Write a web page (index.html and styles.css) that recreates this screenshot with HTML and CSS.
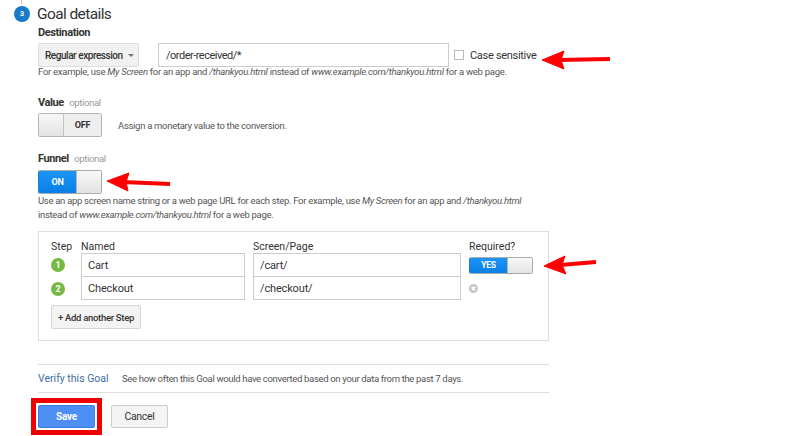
FILE: index.html
```html
<!DOCTYPE html>
<html>
<head>
<meta charset="utf-8">
<link rel="stylesheet" href="styles.css">
</head>
<body>
<div class="page">
  <div class="header">
    <span class="stepnum">3</span>
    <span class="title">Goal details</span>
  </div>
  <div class="content">
    <div class="label">Destination</div>
    <div class="dest-row">
      <div class="dropdown">Regular expression <span class="caret"></span></div>
      <div class="input dest-input">/order-received/*</div>
      <span class="checkbox"></span>
      <span class="cb-label">Case sensitive</span>
    </div>
    <div class="help">For example, use <i>My Screen</i> for an app and <i>/thankyou.html</i> instead of <i>www.example.com/thankyou.html</i> for a web page.</div>

    <div class="label value-label">Value <span class="optional">optional</span></div>
    <div class="toggle-row">
      <div class="toggle off"><span class="knob"></span><span class="state">OFF</span></div>
      <span class="toggle-text">Assign a monetary value to the conversion.</span>
    </div>

    <div class="label funnel-label">Funnel <span class="optional">optional</span></div>
    <div class="toggle-row">
      <div class="toggle on"><span class="state">ON</span><span class="knob"></span></div>
    </div>
    <div class="help funnel-help">Use an app screen name string or a web page URL for each step. For example, use <i>My Screen</i> for an app and <i>/thankyou.html</i><br>instead of <i>www.example.com/thankyou.html</i> for a web page.</div>

    <div class="funnel-box">
      <div class="frow fhead">
        <span class="c-step">Step</span>
        <span class="c-name">Named</span>
        <span class="c-page">Screen/Page</span>
        <span class="c-req">Required?</span>
      </div>
      <div class="frow step-row">
        <span class="c-step"><span class="dot">1</span></span>
        <div class="input c-name">Cart</div>
        <div class="input c-page">/cart/</div>
        <div class="c-req"><div class="toggle small on"><span class="state">YES</span><span class="knob"></span></div></div>
      </div>
      <div class="frow step-row second">
        <span class="c-step"><span class="dot">2</span></span>
        <div class="input c-name">Checkout</div>
        <div class="input c-page">/checkout/</div>
        <div class="c-req"><span class="remove">
          <svg width="9" height="9" viewBox="0 0 9 9"><circle cx="4.5" cy="4.5" r="4.5" fill="#c6c6c6"/><path d="M2.8 2.8 L6.2 6.2 M6.2 2.8 L2.8 6.2" stroke="#fff" stroke-width="1.4"/></svg>
        </span></div>
      </div>
      <button class="btn add-step">+ Add another Step</button>
    </div>

    <div class="verify">
      <span class="verify-link">Verify this Goal</span>
      <span class="verify-text">See how often this Goal would have converted based on your data from the past 7 days.</span>
    </div>

    <div class="actions">
      <span class="highlight"><button class="btn save">Save</button></span>
      <button class="btn cancel">Cancel</button>
    </div>
  </div>

  <svg class="annotations" width="812" height="436" viewBox="0 0 812 436">
    <g fill="#f00" stroke="#f00">
      <line x1="558" y1="60" x2="610" y2="59" stroke-width="4"/>
      <polygon points="542,60 564,51 561,60 564,69" stroke-width="1"/>
      <line x1="123" y1="182" x2="170" y2="184" stroke-width="4"/>
      <polygon points="107,181 129,173 126,182 128,191" stroke-width="1"/>
      <line x1="560" y1="265" x2="596" y2="262" stroke-width="4"/>
      <polygon points="544,266 565,256 562,265 566,274" stroke-width="1"/>
    </g>
  </svg>
</div>
</body>
</html>
```

FILE: styles.css
```css
* { box-sizing: border-box; }
html, body { margin: 0; padding: 0; background: #fff; }
body {
  font-family: Roboto, "Liberation Sans", Arial, sans-serif;
  color: #333;
  width: 812px;
  height: 436px;
  overflow: hidden;
}
.page { position: relative; width: 812px; height: 436px; }

.header {
  display: flex;
  align-items: center;
  height: 26px;
  padding-left: 14px;
  padding-top: 2px;
}
.stepnum {
  position: relative;
  width: 16px;
  height: 16px;
  border-radius: 50%;
  background: #1a79c9;
  color: #fff;
  font-size: 7px;
  font-weight: bold;
  display: flex;
  align-items: center;
  justify-content: center;
  margin-right: 7px;
}
.stepnum::before {
  content: "";
  position: absolute;
  left: 7px;
  top: -8px;
  width: 1px;
  height: 6px;
  background: #ccc;
}
.title { font-size: 15.5px; letter-spacing: -0.6px; color: #333; line-height: 20px; }

.content { padding-left: 38px; width: 549px; }

.label {
  font-size: 11px;
  font-weight: bold;
  line-height: 13px;
  color: #333;
  letter-spacing: -0.4px;
}
.optional { font-weight: normal; font-size: 9.5px; color: #999; margin-left: 3px; letter-spacing: -0.35px; }

.dest-row { display: flex; align-items: center; margin-top: 4px; height: 24px; }
.dropdown {
  width: 101px;
  height: 24px;
  background: #f1f1f1;
  border: 1px solid #ddd;
  border-radius: 2px;
  font-size: 10px;
  font-weight: 500;
  letter-spacing: -0.45px;
  color: #333;
  display: flex;
  align-items: center;
  padding-left: 6px;
  white-space: nowrap;
}
.caret {
  display: inline-block;
  width: 0; height: 0;
  border-left: 3px solid transparent;
  border-right: 3px solid transparent;
  border-top: 3px solid #777;
  margin-left: 5px;
}
.input {
  height: 24px;
  border: 1px solid #ccc;
  background: #fff;
  font-size: 11px;
  color: #333;
  display: flex;
  align-items: center;
  padding-left: 7px;
}
.dest-input { width: 291px; margin-left: 19px; letter-spacing: -0.5px; }
.checkbox {
  width: 10px; height: 10px;
  border: 1px solid #bbb;
  background: #fff;
  margin-left: 5px;
}
.cb-label { font-size: 11px; margin-left: 6px; color: #333; letter-spacing: -0.3px; }

.help {
  font-size: 9.5px;
  line-height: 12px;
  color: #555;
  margin-top: -1px;
  white-space: nowrap;
  letter-spacing: -0.27px;
}

.value-label { margin-top: 18px; }
.funnel-label { margin-top: 15px; }
.toggle-row { display: flex; align-items: center; margin-top: 4px; }
.funnel-label + .toggle-row { margin-top: 5px; }

.toggle {
  display: flex;
  width: 64px;
  height: 24px;
  border: 1px solid #b5b5b5;
  border-radius: 2px;
  overflow: hidden;
}
.toggle .knob {
  width: 25px;
  background: linear-gradient(#f8f8f8, #e3e3e3);
}
.toggle .state {
  flex: 1;
  display: flex;
  align-items: center;
  justify-content: center;
  font-size: 9px;
  font-weight: bold;
  letter-spacing: -0.2px;
}
.toggle.off .knob { border-right: 1px solid #c4c4c4; }
.toggle.off .state { background: #eee; color: #333; }
.toggle.on .state { background: linear-gradient(#1b95f5, #0a7fe6); color: #fff; }
.toggle.on .knob { border-left: 1px solid #b5b5b5; }
.toggle.on { border-color: #aaa; border-left-color: #1d7fd8; }
.toggle-text { font-size: 9.5px; color: #555; margin-left: 16px; letter-spacing: -0.3px; }

.funnel-help { line-height: 13.5px; margin-top: 0; letter-spacing: -0.3px; }

.funnel-box {
  margin-top: 10px;
  width: 511px;
  border: 1px solid #ddd;
  padding: 9px 0 11px 12px;
}
.frow { display: flex; align-items: center; }
.fhead { font-size: 10.5px; line-height: 12px; height: 12px; color: #333; }
.c-step { width: 30px; flex: none; display: flex; }
.c-name { width: 164px; flex: none; }
.c-page { width: 208px; flex: none; margin-left: 8px; }
.c-req { margin-left: 8px; display: flex; align-items: center; }
.step-row .input { height: 24px; font-size: 11px; padding-left: 6px; letter-spacing: -0.15px; }
.step-row.second .input { border-top: none; height: 23px; }
.dot {
  width: 14px; height: 14px;
  border-radius: 50%;
  background: #74b943;
  color: #fff;
  font-size: 9px;
  font-weight: bold;
  display: flex;
  align-items: center;
  justify-content: center;
}
.toggle.small { height: 17px; width: 64px; }
.toggle.small .state { font-size: 8.5px; }
.remove { display: flex; }

.btn {
  font-family: Roboto, "Liberation Sans", Arial, sans-serif;
  height: 24px;
  border: 1px solid #ccc;
  border-radius: 2px;
  background: #f1f1f1;
  color: #333;
  font-size: 10px;
  font-weight: 500;
  padding: 0;
  cursor: pointer;
}
.add-step { width: 90px; margin-top: 5px; display: block; background: #f3f3f3; border-color: #d6d6d6; font-size: 9.5px; letter-spacing: -0.3px; }

.verify {
  margin-top: 23px;
  width: 511px;
  height: 29px;
  border-top: 1px solid #ddd;
  border-bottom: 1px solid #ddd;
  display: flex;
  align-items: center;
}
.verify-link { font-size: 10.5px; color: #3c6e9f; width: 84px; }
.verify-text { font-size: 9.5px; color: #555; letter-spacing: -0.33px; }

.actions { display: flex; align-items: center; margin-top: 5px; margin-left: -7px; }
.highlight {
  display: flex;
  border: 5px solid #ee0000;
  padding: 2px;
}
.save {
  width: 57px; height: 23px;
  background: #4d8ff5;
  border: 1px solid #3a7de8;
  color: #fff;
  font-weight: bold;
  letter-spacing: -0.2px;
}
.cancel { width: 57px; height: 23px; margin-left: 9px; background: #f4f4f4; border-color: #ccc; font-size: 10.5px; font-weight: normal; letter-spacing: -0.3px; }

.annotations { position: absolute; left: 0; top: 0; pointer-events: none; }
```
